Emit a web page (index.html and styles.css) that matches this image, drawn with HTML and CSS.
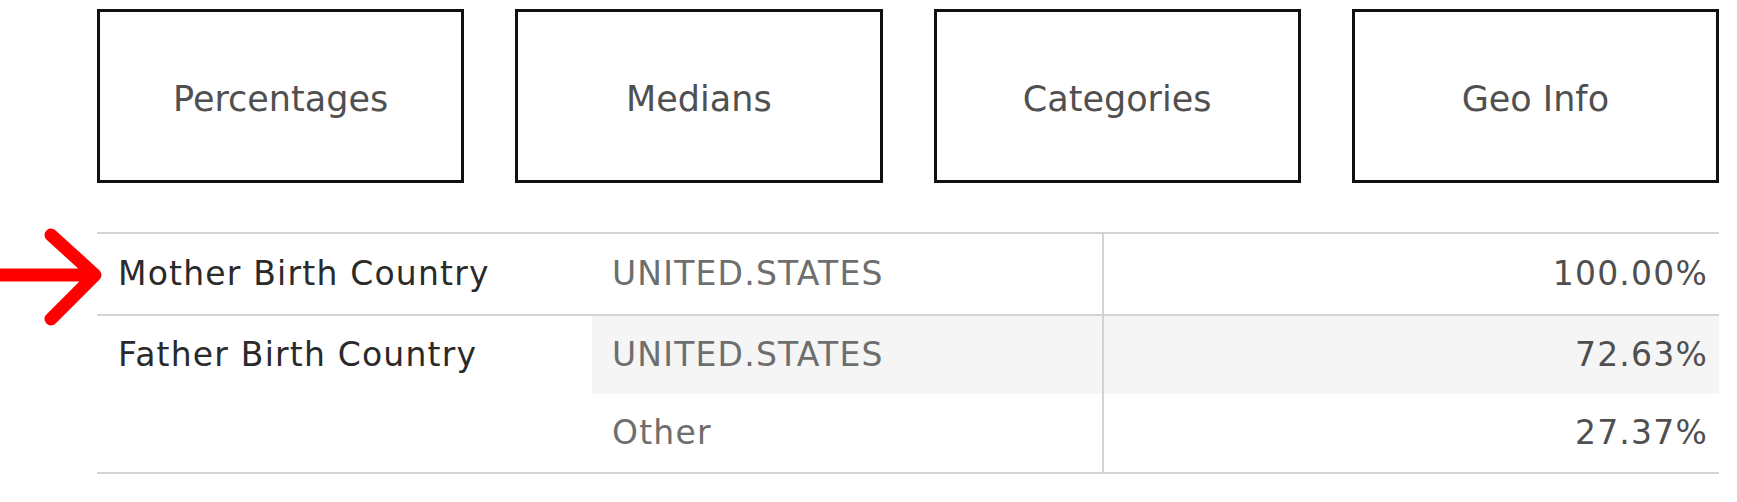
FILE: index.html
```html
<!DOCTYPE html>
<html lang="en">
<head>
<meta charset="utf-8">
<title>Birth Country</title>
<link rel="stylesheet" href="styles.css">
</head>
<body>
<div class="page">
  <nav class="tabs">
    <div class="tab">Percentages</div>
    <div class="tab">Medians</div>
    <div class="tab">Categories</div>
    <div class="tab">Geo Info</div>
  </nav>

  <div class="table">
    <div class="cell rowhead first">Mother Birth Country</div>
    <div class="cell value first">UNITED.STATES</div>
    <div class="cell num first">100.00%</div>

    <div class="cell rowhead span2">Father Birth Country</div>
    <div class="cell value shaded">UNITED.STATES</div>
    <div class="cell num shaded">72.63%</div>
    <div class="cell value">Other</div>
    <div class="cell num">27.37%</div>
  </div>

  <svg class="annot-arrow" width="110" height="110" viewBox="0 0 110 110" aria-hidden="true">
    <path d="M-8 55 H93 M51 15 L95 55 L51 99" fill="none" stroke="#ff0000" stroke-width="13" stroke-linecap="round" stroke-linejoin="round"/>
  </svg>
</div>
</body>
</html>
```

FILE: styles.css
```css
html, body {
  margin: 0;
  padding: 0;
  background: #ffffff;
}

.page {
  position: relative;
  width: 1737px;
  height: 502px;
  box-sizing: border-box;
  padding: 9px 18px 0 97px;
  font-family: "DejaVu Sans", Verdana, sans-serif;
}

.tabs {
  display: grid;
  grid-template-columns: repeat(4, 1fr);
  column-gap: 51px;
}

.tab {
  height: 174px;
  box-sizing: border-box;
  border: 3px solid #111111;
  display: flex;
  align-items: center;
  justify-content: center;
  padding-top: 6px;
  font-size: 35px;
  color: #505050;
}

.table {
  margin-top: 49px;
  display: grid;
  grid-template-columns: 495px 512px 1fr;
  border-top: 2px solid #d3d3d3;
  border-bottom: 2px solid #d3d3d3;
  font-size: 33px;
  letter-spacing: 1.2px;
}

.cell {
  line-height: 78px;
  height: 78px;
  white-space: nowrap;
}

.cell.first {
  line-height: 80px;
  height: 80px;
  border-bottom: 2px solid #d3d3d3;
}

.rowhead {
  padding-left: 21px;
  color: #2a2a2a;
}

.rowhead.span2 {
  grid-row: span 2;
  height: auto;
}

.value {
  padding-left: 20px;
  color: #6e6e6e;
  border-right: 2px solid #d3d3d3;
}

.num {
  text-align: right;
  padding-right: 11px;
  color: #4f4f4f;
}

.shaded {
  background: #f5f5f5;
}

.annot-arrow {
  position: absolute;
  left: 0;
  top: 220px;
  overflow: visible;
}
```
